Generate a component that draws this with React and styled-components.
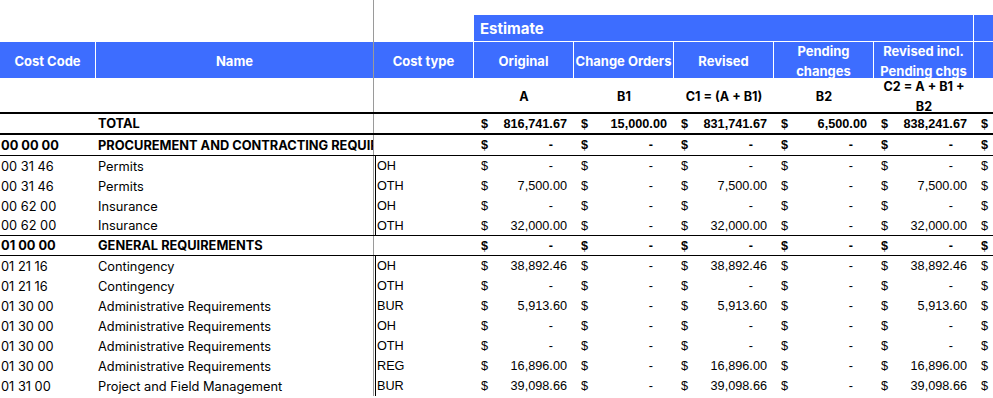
import React from "react";
import styled, { createGlobalStyle } from "styled-components";

const Global = createGlobalStyle`
  html, body { margin: 0; padding: 0; background: #fff; overflow: hidden; }
  body { font-family: Inter, "Liberation Sans", sans-serif; color: #000; }
`;

const BLUE = "#3d6dff";
const GRID = "96px 278px repeat(6, 100px) 1fr";

const Sheet = styled.div`
  width: 993px;
  height: 398px;
  overflow: hidden;
  display: flex;
  flex-direction: column;
`;

const Row = styled.div`
  display: grid;
  grid-template-columns: ${GRID};
  grid-template-rows: minmax(0, 1fr);
  height: ${(p) => p.$h}px;
  flex: none;
  box-sizing: border-box;
  border-top: ${(p) => p.$bt || 0}px solid #000;
  border-bottom: ${(p) => p.$bb || 0}px solid #000;
`;

const Cell = styled.div`
  overflow: hidden;
  white-space: nowrap;
  display: flex;
  align-items: center;
  box-sizing: border-box;
  min-width: 0;
  min-height: 0;
`;

const Blank = styled(Cell)``;

const PaneCell = styled(Cell)`
  border-right: 1px solid #9a9a9a;
`;

const BandCell = styled(Cell)`
  grid-column: ${(p) => (p.$span ? `span ${p.$span}` : "auto")};
  background: ${BLUE};
  color: #fff;
  font-family: Inter, sans-serif;
  font-weight: 700;
  font-size: 15px;
  padding-left: 6px;
  border-bottom: 1px solid #fff;
  border-right: ${(p) => (p.$span ? "1px solid #fff" : "0")};
`;

const HeadCell = styled(Cell)`
  background: ${BLUE};
  color: #fff;
  font-family: Inter, sans-serif;
  font-weight: 700;
  font-size: 13px;
  line-height: 20px;
  white-space: normal;
  justify-content: center;
  text-align: center;
  padding-top: 2px;
  border-right: 1px solid ${(p) => (p.$pane ? "#9a9a9a" : p.$last ? "transparent" : "#fff")};
`;

const LabelCell = styled(Cell)`
  overflow: visible;
  font-family: Inter, sans-serif;
  font-weight: 700;
  font-size: 12.6px;
  line-height: 20px;
  white-space: normal;
  justify-content: center;
  text-align: center;
  padding: 4px 6px 0;
`;

const CodeCell = styled(Cell)`
  font-family: Inter, sans-serif;
  font-size: 12.8px;
  font-weight: ${(p) => (p.$bold ? 700 : 400)};
  padding-left: 1px;
`;

const NameCell = styled(PaneCell)`
  font-family: Inter, sans-serif;
  font-size: 12.8px;
  font-weight: ${(p) => (p.$bold ? 700 : 400)};
  padding-left: 2px;
`;

const TypeCell = styled(Cell)`
  font-family: "Liberation Sans", Arial, sans-serif;
  font-size: 12.7px;
  padding-left: 3px;
  background: ${(p) =>
    p.$line ? "linear-gradient(#000, #000) 1px 0 / 1px 100% no-repeat" : "none"};
`;

const MoneyCell = styled(Cell)`
  justify-content: space-between;
  padding: 0 7px 0 7px;
  font-family: "Liberation Sans", Arial, sans-serif;
  font-size: 12.7px;
  font-weight: ${(p) => (p.$bold ? 700 : 400)};
`;

const Dollar = styled.span``;

const Amount = styled.span`
  padding-right: ${(p) => (p.$dash ? 14 : 0)}px;
`;

const rows = [
  { kind: "section", code: "00 00 00", name: "PROCUREMENT AND CONTRACTING REQUIREMENTS" },
  { code: "00 31 46", name: "Permits", type: "OH" },
  { code: "00 31 46", name: "Permits", type: "OTH", a: "7,500.00" },
  { code: "00 62 00", name: "Insurance", type: "OH" },
  { code: "00 62 00", name: "Insurance", type: "OTH", a: "32,000.00", line: true },
  { kind: "section", code: "01 00 00", name: "GENERAL REQUIREMENTS" },
  { code: "01 21 16", name: "Contingency", type: "OH", a: "38,892.46" },
  { code: "01 21 16", name: "Contingency", type: "OTH" },
  { code: "01 30 00", name: "Administrative Requirements", type: "BUR", a: "5,913.60" },
  { code: "01 30 00", name: "Administrative Requirements", type: "OH" },
  { code: "01 30 00", name: "Administrative Requirements", type: "OTH" },
  { code: "01 30 00", name: "Administrative Requirements", type: "REG", a: "16,896.00" },
  { code: "01 31 00", name: "Project and Field Management", type: "BUR", a: "39,098.66" },
];

function Money({ value, bold }) {
  return (
    <MoneyCell $bold={bold}>
      <Dollar>$</Dollar>
      <Amount $dash={!value}>{value || "-"}</Amount>
    </MoneyCell>
  );
}

function DollarOnly({ bold }) {
  return (
    <MoneyCell $bold={bold}>
      <Dollar>$</Dollar>
    </MoneyCell>
  );
}

const headers = ["Original", "Change Orders", "Revised", "Pending changes", "Revised incl. Pending chgs"];
const labels = ["A", "B1", "C1 = (A + B1)", "B2", "C2 = A + B1 + B2"];

export default function App() {
  return (
    <Sheet>
      <Global />
      <Row $h={15}>
        <Blank />
        <PaneCell />
      </Row>
      <Row $h={27}>
        <Blank />
        <PaneCell />
        <Blank />
        <BandCell $span={5}>Estimate</BandCell>
        <BandCell />
      </Row>
      <Row $h={36}>
        <HeadCell>Cost Code</HeadCell>
        <HeadCell $pane>Name</HeadCell>
        <HeadCell>Cost type</HeadCell>
        {headers.map((h) => (
          <HeadCell key={h}>{h}</HeadCell>
        ))}
        <HeadCell $last />
      </Row>
      <Row $h={34}>
        <Blank />
        <PaneCell />
        <Blank />
        {labels.map((l) => (
          <LabelCell key={l}>{l}</LabelCell>
        ))}
      </Row>
      <Row $h={23} $bt={2} $bb={2}>
        <CodeCell $bold />
        <NameCell $bold>TOTAL</NameCell>
        <TypeCell />
        <Money value="816,741.67" bold />
        <Money value="15,000.00" bold />
        <Money value="831,741.67" bold />
        <Money value="6,500.00" bold />
        <Money value="838,241.67" bold />
        <DollarOnly bold />
      </Row>
      {rows.map((r, i) => {
        const section = r.kind === "section";
        const vals = section ? [null, null, null, null, null] : [r.a, null, r.a, null, r.a];
        return (
          <Row key={i} $h={i === 0 ? 21 : 20} $bb={section || r.line ? 1 : 0}>
            <CodeCell $bold={section}>{r.code}</CodeCell>
            <NameCell $bold={section}>{r.name}</NameCell>
            <TypeCell $line={!section}>{r.type}</TypeCell>
            {vals.map((v, j) => (
              <Money key={j} value={v} bold={section} />
            ))}
            <DollarOnly bold={section} />
          </Row>
        );
      })}
    </Sheet>
  );
}
